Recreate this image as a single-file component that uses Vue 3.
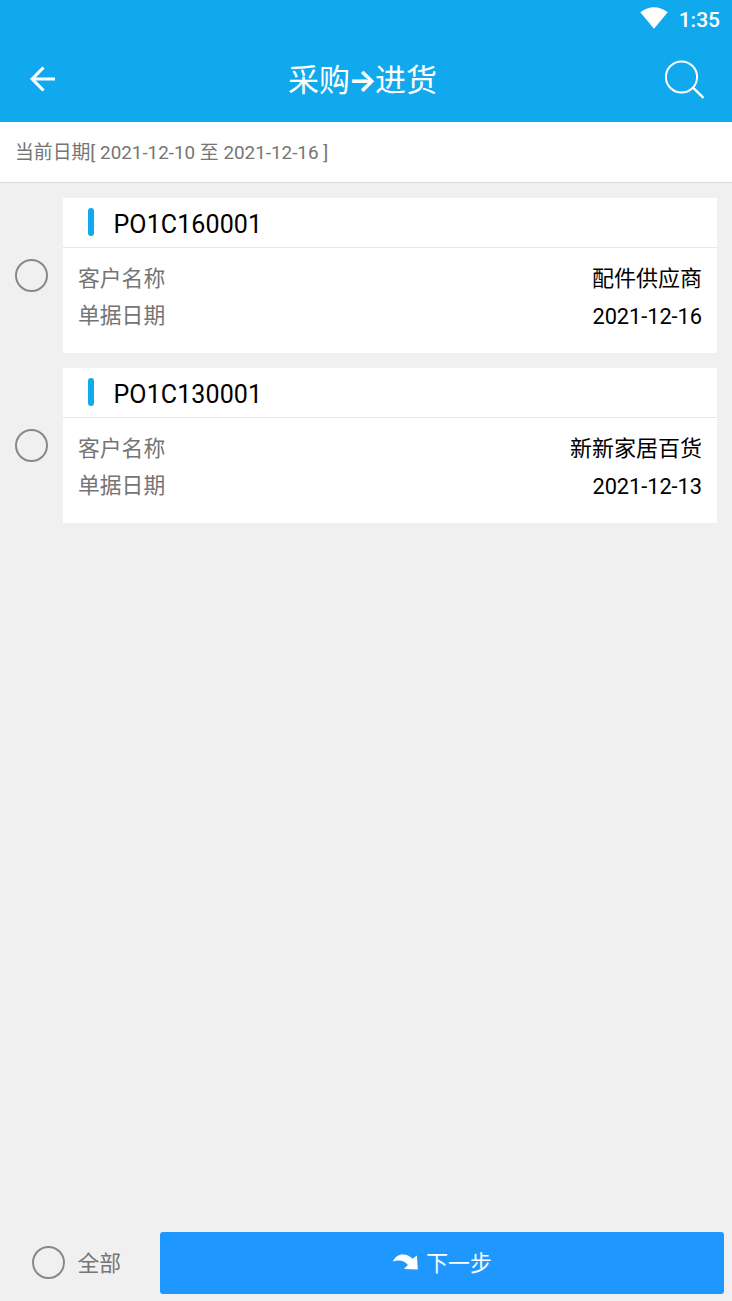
<script setup>
import { ref } from 'vue';

const orders = ref([
  { no: 'PO1C160001', customer: '配件供应商', date: '2021-12-16', checked: false },
  { no: 'PO1C130001', customer: '新新家居百货', date: '2021-12-13', checked: false },
]);
const startDate = ref('2021-12-10');
const endDate = ref('2021-12-16');
const allChecked = ref(false);

const toggle = (order) => {
  order.checked = !order.checked;
  allChecked.value = orders.value.every((o) => o.checked);
};

const toggleAll = () => {
  allChecked.value = !allChecked.value;
  orders.value.forEach((o) => { o.checked = allChecked.value; });
};
</script>

<template>
  <div class="page">
    <header class="header">
      <div class="status-bar">
        <svg class="wifi" width="28" height="22" viewBox="0 0 28 22">
          <path d="M0.3 5.2 Q14 -4.6 27.7 5.2 L14 21.7 Z" fill="#fff" />
        </svg>
        <span class="time">1:35</span>
      </div>
      <div class="nav-bar">
        <svg class="back" width="26" height="26" viewBox="0 0 26 26">
          <path d="M25 13 H3 M13.5 1.5 L2.2 13 L13.5 24.5" fill="none" stroke="#fff" stroke-width="3.2" />
        </svg>
        <h1 class="title">采购<span class="arrow">→</span>进货</h1>
        <svg class="search" width="40" height="40" viewBox="0 0 40 40">
          <circle cx="16.5" cy="17" r="15.6" fill="none" stroke="#fff" stroke-width="2" />
          <path d="M28 27.6 L38.5 37.8" stroke="#fff" stroke-width="2.4" />
        </svg>
      </div>
    </header>

    <div class="date-bar">当前日期[ {{ startDate }} 至 {{ endDate }} ]</div>

    <main class="list">
      <div v-for="order in orders" :key="order.no" class="order">
        <span class="radio" :class="{ 'is-checked': order.checked }" @click="toggle(order)"></span>
        <section class="card">
          <div class="card-head">
            <i class="mark"></i>
            <span class="order-no">{{ order.no }}</span>
          </div>
          <div class="card-body">
            <div class="row">
              <span class="label">客户名称</span>
              <span class="customer">{{ order.customer }}</span>
            </div>
            <div class="row">
              <span class="label">单据日期</span>
              <span class="date">{{ order.date }}</span>
            </div>
          </div>
        </section>
      </div>
    </main>

    <footer class="footer">
      <div class="select-all" @click="toggleAll">
        <span class="radio" :class="{ 'is-checked': allChecked }"></span>
        <span class="all-text">全部</span>
      </div>
      <button class="next-btn">
        <svg width="26" height="18" viewBox="0 0 26 18">
          <path d="M0.8 8.6 C3 3.6 6.6 1.4 10.6 1.4 C15 1.4 18.6 3.4 20.6 5.8 L24.9 2.4 L25.8 16.6 L12 15.9 L15.9 12 C13.4 8.2 7.4 6 0.8 8.6 Z" fill="#fff" />
        </svg>
        <span class="next-text">下一步</span>
      </button>
    </footer>
  </div>
</template>

<style>
body { margin: 0; background: #f0f0f0; }
</style>

<style scoped>
.page { height: 1301px; display: flex; flex-direction: column; background: #f0f0f0; font-family: Roboto, "Noto Sans CJK SC", sans-serif; font-size: 21.8px; color: #000; }
.header { height: 122px; background: #11a9ed; color: #fff; }
.status-bar { height: 38px; display: flex; justify-content: flex-end; align-items: center; padding-right: 12px; }
.wifi { margin: 0 11px 2px 0; }
.time { padding-top: 1px; font-size: 21px; line-height: 38px; font-weight: 500; }
.nav-bar { height: 84px; display: flex; align-items: center; justify-content: space-between; padding: 0 27px 0 30px; box-sizing: border-box; }
.back { margin: 0 4px 2px 0; }
.title { margin: 0; padding-top: 2px; display: flex; align-items: center; font-size: 31px; line-height: 46px; font-weight: 400; }
.arrow { width: 25px; display: flex; justify-content: center; font-family: Inter, sans-serif; font-size: 30px; font-weight: 700; line-height: 40px; padding-bottom: 3px; }
.date-bar { height: 61px; box-sizing: border-box; padding-left: 15px; background: #fff; border-bottom: 1px solid #dadada; color: #757575; font-size: 18.85px; line-height: 62px; white-space: nowrap; }
.list { flex: 1; padding: 15px 15px 0; }
.order { display: flex; align-items: center; margin-bottom: 15px; }
.radio { flex: none; width: 33px; height: 33px; box-sizing: border-box; border: 2px solid #888; border-radius: 50%; }
.is-checked { border-color: #11a9ed; background: #11a9ed; }
.card { flex: 1; height: 155px; margin-left: 15px; background: #fff; }
.card-head { height: 50px; box-sizing: border-box; display: flex; align-items: center; padding-left: 25px; border-bottom: 1px solid #e8e8e8; }
.mark { width: 6px; height: 28px; margin-bottom: 2px; border-radius: 3px; background: #11a9ed; }
.order-no { margin: 4px 0 0 19.5px; font-size: 25px; line-height: 36px; letter-spacing: 0.1px; }
.card-body { padding: 12px 15px 0; }
.row { display: flex; justify-content: space-between; height: 37px; line-height: 37px; }
.label { color: #757575; }
.customer { font-size: 22px; }
.date { padding-top: 1px; letter-spacing: -0.05px; }
.footer { display: flex; align-items: center; height: 77px; padding-right: 8px; box-sizing: border-box; }
.select-all { width: 160px; box-sizing: border-box; padding-left: 32px; display: flex; align-items: center; gap: 12.5px; color: #757575; }
.all-text, .next-text { padding-bottom: 2px; }
.next-btn { flex: 1; height: 62px; display: flex; align-items: center; justify-content: center; gap: 8px; padding: 0; border: none; border-radius: 3px; background: #1e98ff; color: #fff; font: inherit; }
.next-btn svg { margin-bottom: 1px; }
</style>
